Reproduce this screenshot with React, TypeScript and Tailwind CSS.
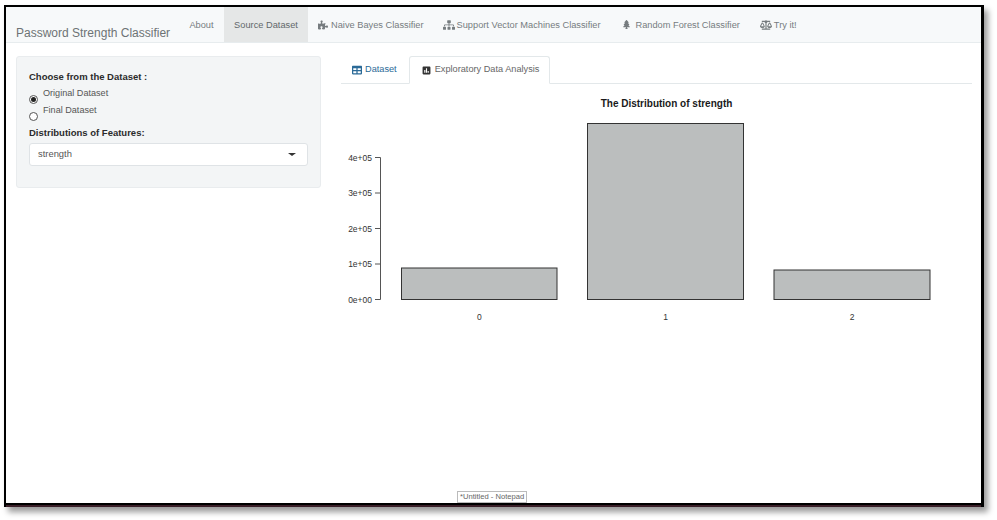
import { FaBalanceScale, FaPoll, FaPuzzlePiece, FaSitemap, FaTable, FaTree } from "react-icons/fa";

const navItems = [
  { label: "Naive Bayes Classifier", icon: <FaPuzzlePiece className="text-[10px] mr-[3px]" />, cls: "ml-[10px] mr-[9px]" },
  { label: "Support Vector Machines Classifier", icon: <FaSitemap className="text-[12px] mr-[2px] -mt-[1px]" />, cls: "ml-[10px] mr-[11px]" },
  { label: "Random Forest Classifier", icon: <FaTree className="text-[9px] mr-[5px]" />, cls: "ml-[10px] mr-[10px]" },
  { label: "Try it!", icon: <FaBalanceScale className="text-[12px] mr-[2px] -mt-[1px]" />, cls: "ml-[10px]" },
];

function Chart() {
  const ticks = [
    { y: 299.5, label: "0e+00" },
    { y: 264, label: "1e+05" },
    { y: 228.5, label: "2e+05" },
    { y: 193, label: "3e+05" },
    { y: 157.5, label: "4e+05" },
  ];
  const bars = [
    { x: 401.5, y: 268, w: 155.5, h: 31.5, label: "0" },
    { x: 587.5, y: 123.5, w: 156, h: 176, label: "1" },
    { x: 774, y: 270, w: 156, h: 29.5, label: "2" },
  ];
  // coordinates here are page pixels, the viewBox takes off the plot's own offset
  return (
    <svg width="640" height="240" viewBox="340 95 640 240" className="block" fontFamily="Liberation Sans, Arial, sans-serif">
      <text x="666.5" y="107" textAnchor="middle" fontSize="10" fontWeight="700" fill="#1a1a1a">
        The Distribution of strength
      </text>
      <path d="M380.5 157.5V299.5" stroke="#555" fill="none" />
      {ticks.map((t) => (
        <g key={t.label}>
          <path d={`M375 ${t.y}H380.5`} stroke="#555" />
          <text x="372" y={t.y + 3} textAnchor="end" fontSize="8.5" fill="#333">
            {t.label}
          </text>
        </g>
      ))}
      {bars.map((b) => (
        <g key={b.label}>
          <rect x={b.x} y={b.y} width={b.w} height={b.h} fill="#bbbebe" stroke="#333" />
          <text x={b.x + b.w / 2} y="320" textAnchor="middle" fontSize="8.5" fill="#333">
            {b.label}
          </text>
        </g>
      ))}
    </svg>
  );
}

export default function App() {
  return (
    <div className="w-[997px] h-[520px] bg-white pl-[4px] pt-[5px] overflow-hidden font-['Liberation_Sans',Arial,sans-serif]">
      <div className="relative w-[980px] h-[502px] border-2 border-black border-b-[4px] border-r-[3px] bg-white shadow-[4px_5px_6px_rgba(0,0,0,0.4)]">
        <nav className="flex items-stretch h-[36px] bg-[#f7f9fa] border-b border-[#e7ecee] text-[#767c7f] text-[9.25px]">
          <span className="ml-[10px] mt-[18px] text-[12px] leading-[16px] text-[#6d7375] w-[163px] whitespace-nowrap">Password Strength Classifier</span>
          <a className="w-[45px] text-center pt-[12px]">About</a>
          <a className="w-[84px] text-center pt-[12px] bg-[#e5e7e7] text-[#62686b] whitespace-nowrap">Source Dataset</a>
          {navItems.map((n) => (
            <a key={n.label} className={`flex items-start pt-[12px] whitespace-nowrap ${n.cls}`}>
              <span className="mt-[1px]">{n.icon}</span>
              {n.label}
            </a>
          ))}
        </nav>

        <div className="flex items-start pt-[13px]">
          <aside className="ml-[10px] w-[305px] h-[132px] bg-[#f3f5f6] border border-[#e9ecee] rounded-[3px] px-[12px] pt-[13px] text-[#2b2b2b]">
            <div className="text-[9.5px] font-bold leading-[14px]">Choose from the Dataset :</div>
            <label className="flex mt-[3px] h-[17px] text-[9.1px] text-[#555]">
              <span className="mt-[8px] w-[9px] h-[9px] rounded-full border border-[#555] bg-white flex items-center justify-center">
                <span className="w-[5px] h-[5px] rounded-full bg-[#222]" />
              </span>
              <span className="ml-[5px] leading-[12px]">Original Dataset</span>
            </label>
            <label className="flex h-[17px] text-[9.1px] text-[#555]">
              <span className="mt-[8px] w-[9px] h-[9px] rounded-full border border-[#555] bg-white" />
              <span className="ml-[5px] leading-[12px]">Final Dataset</span>
            </label>
            <div className="text-[9.5px] font-bold leading-[14px] mt-[5px]">Distributions of Features:</div>
            <div className="flex items-center justify-between mt-[3px] w-[279px] h-[23px] bg-white border border-[#dfe3e6] rounded-[3px] pl-[8px] pr-[11px] text-[9.4px] text-[#555]">
              strength
              <span className="border-x-[4px] border-x-transparent border-t-[3px] border-t-[#333]" />
            </div>
          </aside>

          <main className="ml-[20px] w-[631px]">
            <div className="flex h-[28px] border-b border-[#e3e8ea] text-[9.2px]">
              <a className="flex items-center gap-[3px] pl-[11px] pr-[12px] text-[#2a6a97]">
                <FaTable className="text-[10px]" />
                Dataset
              </a>
              <a className="flex items-center gap-[4px] pl-[12px] w-[141px] h-[28px] bg-white border border-[#e3e8ea] border-b-white rounded-t-[3px] text-[#666] whitespace-nowrap">
                <FaPoll className="text-[9px] text-[#333]" />
                Exploratory Data Analysis
              </a>
            </div>
          </main>
        </div>

        <div className="absolute left-[334px] top-[88px]">
          <Chart />
        </div>

        <div className="absolute left-[451px] bottom-0 h-[12px] px-[2px] bg-white border border-[#bbb] text-[7.6px] leading-[10px] text-[#666] whitespace-nowrap">*Untitled - Notepad</div>
        <div className="absolute left-0 right-0 -bottom-[4px] h-[2px] bg-[#3a1f28]" />
      </div>
    </div>
  );
}
